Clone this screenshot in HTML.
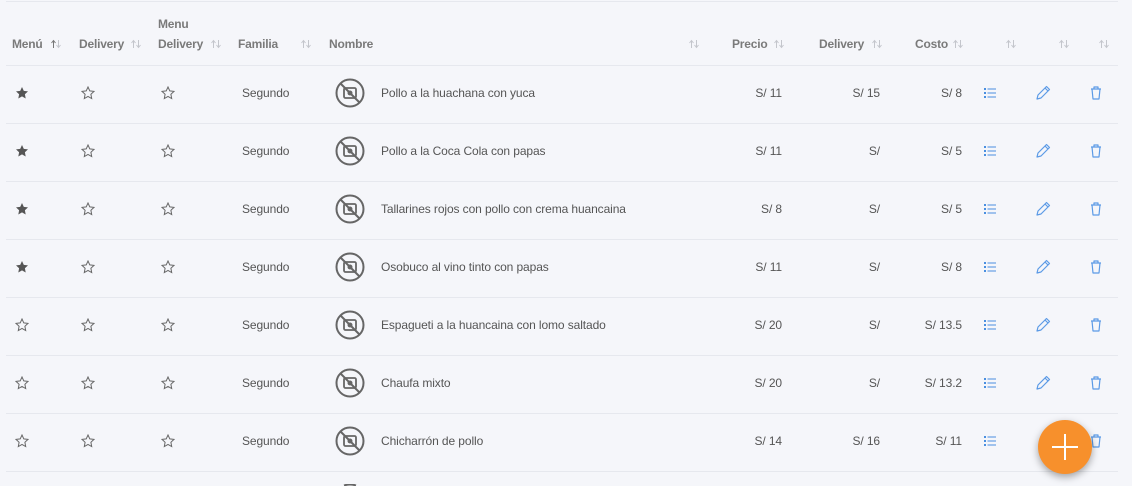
<!DOCTYPE html>
<html style="overflow:hidden;height:486px"><head><meta charset="utf-8"><style>
body{margin:0;width:1132px;height:486px;overflow:hidden;background:#f5f6fa;font-family:"Liberation Sans",sans-serif;position:relative}
.hl{position:absolute;left:6px;width:1112px;height:1px;background:#e6e8ee}
.h{position:absolute;font-size:12px;font-weight:bold;color:#7a7a7a;letter-spacing:-0.2px}
.r{position:absolute;left:0;width:1132px;height:58px}
.r>*{position:absolute}
.t{font-size:12px;color:#555;top:21px;letter-spacing:-0.1px}
.rt{text-align:right;width:80px}
svg{position:absolute}
</style></head><body>
<svg width="0" height="0" style="position:absolute"><defs>
<symbol id="sf" viewBox="0 0 14 14"><path d="M7 1l1.8 3.9 4.2.5-3.1 2.9.8 4.2L7 10.4 3.3 12.5l.8-4.2L1 5.4l4.2-.5z" fill="#555"/></symbol>
<symbol id="so" viewBox="0 0 14 14"><path d="M7 1l1.8 3.9 4.2.5-3.1 2.9.8 4.2L7 10.4 3.3 12.5l.8-4.2L1 5.4l4.2-.5z" fill="none" stroke="#666" stroke-width="1"/></symbol>
<symbol id="np" viewBox="0 0 30 30"><circle cx="15" cy="15" r="13.5" fill="none" stroke="#666" stroke-width="2"/><line x1="5.5" y1="5.5" x2="24.5" y2="24.5" stroke="#666" stroke-width="2"/><rect x="9" y="10" width="12" height="10" rx="1.5" fill="none" stroke="#666" stroke-width="1.8"/><circle cx="15" cy="15" r="2.5" fill="#666"/></symbol>
<symbol id="ls" viewBox="0 0 14 14"><g fill="#4a8fe0"><rect x="1" y="2" width="2" height="2"/><rect x="1" y="6" width="2" height="2"/><rect x="1" y="10" width="2" height="2"/><rect x="4.5" y="2.5" width="8.5" height="1"/><rect x="4.5" y="6.5" width="8.5" height="1"/><rect x="4.5" y="10.5" width="8.5" height="1"/></g></symbol>
<symbol id="pe" viewBox="0 0 16 16"><path d="M2 14l1-4 8.5-8.5 3 3L6 13z M10 3l3 3" fill="none" stroke="#5b9ae6" stroke-width="1.2" stroke-linejoin="round"/></symbol>
<symbol id="tr" viewBox="0 0 14 16"><path d="M2 4h10M5 4V2h4v2M3 4l1 10h6l1-10" fill="none" stroke="#5b9ae6" stroke-width="1.2" stroke-linejoin="round"/></symbol>
<symbol id="ar" viewBox="0 0 12 10"><path d="M3.5 9V2M1.5 4l2-2.5 2 2.5M8.5 1v7M6.5 6l2 2.5 2-2.5" fill="none" stroke="#c4c6cc" stroke-width="1"/></symbol>
<symbol id="ar2" viewBox="0 0 12 10"><path d="M3.5 9V2M1.5 4l2-2.5 2 2.5" fill="none" stroke="#777" stroke-width="1"/><path d="M8.5 1v7M6.5 6l2 2.5 2-2.5" fill="none" stroke="#c4c6cc" stroke-width="1"/></symbol>
</defs></svg>

<div class="hl" style="top:1px"></div>
<div class="h" style="left:158px;top:17px">Menu</div>
<div class="h" style="left:12px;top:37px">Menú</div><svg style="left:50px;top:39px" width="12" height="10"><use href="#ar2"/></svg>
<div class="h" style="left:79px;top:37px">Delivery</div><svg style="left:130px;top:39px" width="12" height="10"><use href="#ar"/></svg>
<div class="h" style="left:158px;top:37px">Delivery</div><svg style="left:210px;top:39px" width="12" height="10"><use href="#ar"/></svg>
<div class="h" style="left:238px;top:37px">Familia</div><svg style="left:300px;top:39px" width="12" height="10"><use href="#ar"/></svg>
<div class="h" style="left:329px;top:37px">Nombre</div><svg style="left:688px;top:39px" width="12" height="10"><use href="#ar"/></svg>
<div class="h" style="left:732px;top:37px">Precio</div><svg style="left:773px;top:39px" width="12" height="10"><use href="#ar"/></svg>
<div class="h" style="left:819px;top:37px">Delivery</div><svg style="left:871px;top:39px" width="12" height="10"><use href="#ar"/></svg>
<div class="h" style="left:915px;top:37px">Costo</div><svg style="left:952px;top:39px" width="12" height="10"><use href="#ar"/></svg>
<svg style="left:1005px;top:39px" width="12" height="10"><use href="#ar"/></svg><svg style="left:1058px;top:39px" width="12" height="10"><use href="#ar"/></svg><svg style="left:1098px;top:39px" width="12" height="10"><use href="#ar"/></svg>
<div class="hl" style="top:65px"></div>

<div class="r" style="top:65px"><svg style="left:15px;top:21px" width="14" height="14"><use href="#sf"/></svg><svg style="left:81px;top:21px" width="14" height="14"><use href="#so"/></svg><svg style="left:161px;top:21px" width="14" height="14"><use href="#so"/></svg><div class="t" style="left:242px">Segundo</div><svg style="left:335px;top:13px" width="30" height="30"><use href="#np"/></svg><div class="t" style="left:381px">Pollo a la huachana con yuca</div><div class="t rt" style="left:702px">S/ 11</div><div class="t rt" style="left:800px">S/ 15</div><div class="t rt" style="left:882px">S/ 8</div><svg style="left:983px;top:21px" width="14" height="14"><use href="#ls"/></svg><svg style="left:1035px;top:20px" width="16" height="16"><use href="#pe"/></svg><svg style="left:1089px;top:20px" width="14" height="16"><use href="#tr"/></svg></div>
<div class="hl" style="top:123px"></div>

<div class="r" style="top:123px"><svg style="left:15px;top:21px" width="14" height="14"><use href="#sf"/></svg><svg style="left:81px;top:21px" width="14" height="14"><use href="#so"/></svg><svg style="left:161px;top:21px" width="14" height="14"><use href="#so"/></svg><div class="t" style="left:242px">Segundo</div><svg style="left:335px;top:13px" width="30" height="30"><use href="#np"/></svg><div class="t" style="left:381px">Pollo a la Coca Cola con papas</div><div class="t rt" style="left:702px">S/ 11</div><div class="t rt" style="left:800px">S/</div><div class="t rt" style="left:882px">S/ 5</div><svg style="left:983px;top:21px" width="14" height="14"><use href="#ls"/></svg><svg style="left:1035px;top:20px" width="16" height="16"><use href="#pe"/></svg><svg style="left:1089px;top:20px" width="14" height="16"><use href="#tr"/></svg></div>
<div class="hl" style="top:181px"></div>

<div class="r" style="top:181px"><svg style="left:15px;top:21px" width="14" height="14"><use href="#sf"/></svg><svg style="left:81px;top:21px" width="14" height="14"><use href="#so"/></svg><svg style="left:161px;top:21px" width="14" height="14"><use href="#so"/></svg><div class="t" style="left:242px">Segundo</div><svg style="left:335px;top:13px" width="30" height="30"><use href="#np"/></svg><div class="t" style="left:381px">Tallarines rojos con pollo con crema huancaina</div><div class="t rt" style="left:702px">S/ 8</div><div class="t rt" style="left:800px">S/</div><div class="t rt" style="left:882px">S/ 5</div><svg style="left:983px;top:21px" width="14" height="14"><use href="#ls"/></svg><svg style="left:1035px;top:20px" width="16" height="16"><use href="#pe"/></svg><svg style="left:1089px;top:20px" width="14" height="16"><use href="#tr"/></svg></div>
<div class="hl" style="top:239px"></div>

<div class="r" style="top:239px"><svg style="left:15px;top:21px" width="14" height="14"><use href="#sf"/></svg><svg style="left:81px;top:21px" width="14" height="14"><use href="#so"/></svg><svg style="left:161px;top:21px" width="14" height="14"><use href="#so"/></svg><div class="t" style="left:242px">Segundo</div><svg style="left:335px;top:13px" width="30" height="30"><use href="#np"/></svg><div class="t" style="left:381px">Osobuco al vino tinto con papas</div><div class="t rt" style="left:702px">S/ 11</div><div class="t rt" style="left:800px">S/</div><div class="t rt" style="left:882px">S/ 8</div><svg style="left:983px;top:21px" width="14" height="14"><use href="#ls"/></svg><svg style="left:1035px;top:20px" width="16" height="16"><use href="#pe"/></svg><svg style="left:1089px;top:20px" width="14" height="16"><use href="#tr"/></svg></div>
<div class="hl" style="top:297px"></div>

<div class="r" style="top:297px"><svg style="left:15px;top:21px" width="14" height="14"><use href="#so"/></svg><svg style="left:81px;top:21px" width="14" height="14"><use href="#so"/></svg><svg style="left:161px;top:21px" width="14" height="14"><use href="#so"/></svg><div class="t" style="left:242px">Segundo</div><svg style="left:335px;top:13px" width="30" height="30"><use href="#np"/></svg><div class="t" style="left:381px">Espagueti a la huancaina con lomo saltado</div><div class="t rt" style="left:702px">S/ 20</div><div class="t rt" style="left:800px">S/</div><div class="t rt" style="left:882px">S/ 13.5</div><svg style="left:983px;top:21px" width="14" height="14"><use href="#ls"/></svg><svg style="left:1035px;top:20px" width="16" height="16"><use href="#pe"/></svg><svg style="left:1089px;top:20px" width="14" height="16"><use href="#tr"/></svg></div>
<div class="hl" style="top:355px"></div>

<div class="r" style="top:355px"><svg style="left:15px;top:21px" width="14" height="14"><use href="#so"/></svg><svg style="left:81px;top:21px" width="14" height="14"><use href="#so"/></svg><svg style="left:161px;top:21px" width="14" height="14"><use href="#so"/></svg><div class="t" style="left:242px">Segundo</div><svg style="left:335px;top:13px" width="30" height="30"><use href="#np"/></svg><div class="t" style="left:381px">Chaufa mixto</div><div class="t rt" style="left:702px">S/ 20</div><div class="t rt" style="left:800px">S/</div><div class="t rt" style="left:882px">S/ 13.2</div><svg style="left:983px;top:21px" width="14" height="14"><use href="#ls"/></svg><svg style="left:1035px;top:20px" width="16" height="16"><use href="#pe"/></svg><svg style="left:1089px;top:20px" width="14" height="16"><use href="#tr"/></svg></div>
<div class="hl" style="top:413px"></div>

<div class="r" style="top:413px"><svg style="left:15px;top:21px" width="14" height="14"><use href="#so"/></svg><svg style="left:81px;top:21px" width="14" height="14"><use href="#so"/></svg><svg style="left:161px;top:21px" width="14" height="14"><use href="#so"/></svg><div class="t" style="left:242px">Segundo</div><svg style="left:335px;top:13px" width="30" height="30"><use href="#np"/></svg><div class="t" style="left:381px">Chicharrón de pollo</div><div class="t rt" style="left:702px">S/ 14</div><div class="t rt" style="left:800px">S/ 16</div><div class="t rt" style="left:882px">S/ 11</div><svg style="left:983px;top:21px" width="14" height="14"><use href="#ls"/></svg><svg style="left:1089px;top:20px" width="14" height="16"><use href="#tr"/></svg></div>
<div class="hl" style="top:471px"></div>
<svg style="left:335px;top:484px" width="30" height="2" viewBox="0 0 30 2"><path d="M9 1.5Q15 -0.5 21 1.5" fill="none" stroke="#666" stroke-width="2"/></svg>

<div style="position:absolute;left:1038px;top:420px;width:54px;height:54px;border-radius:50%;background:#f7902c;box-shadow:0 3px 8px rgba(0,0,0,.35)">
<div style="position:absolute;left:14px;top:26px;width:26px;height:2px;background:#fff"></div>
<div style="position:absolute;left:26px;top:14px;width:2px;height:26px;background:#fff"></div>
</div>
</body></html>
